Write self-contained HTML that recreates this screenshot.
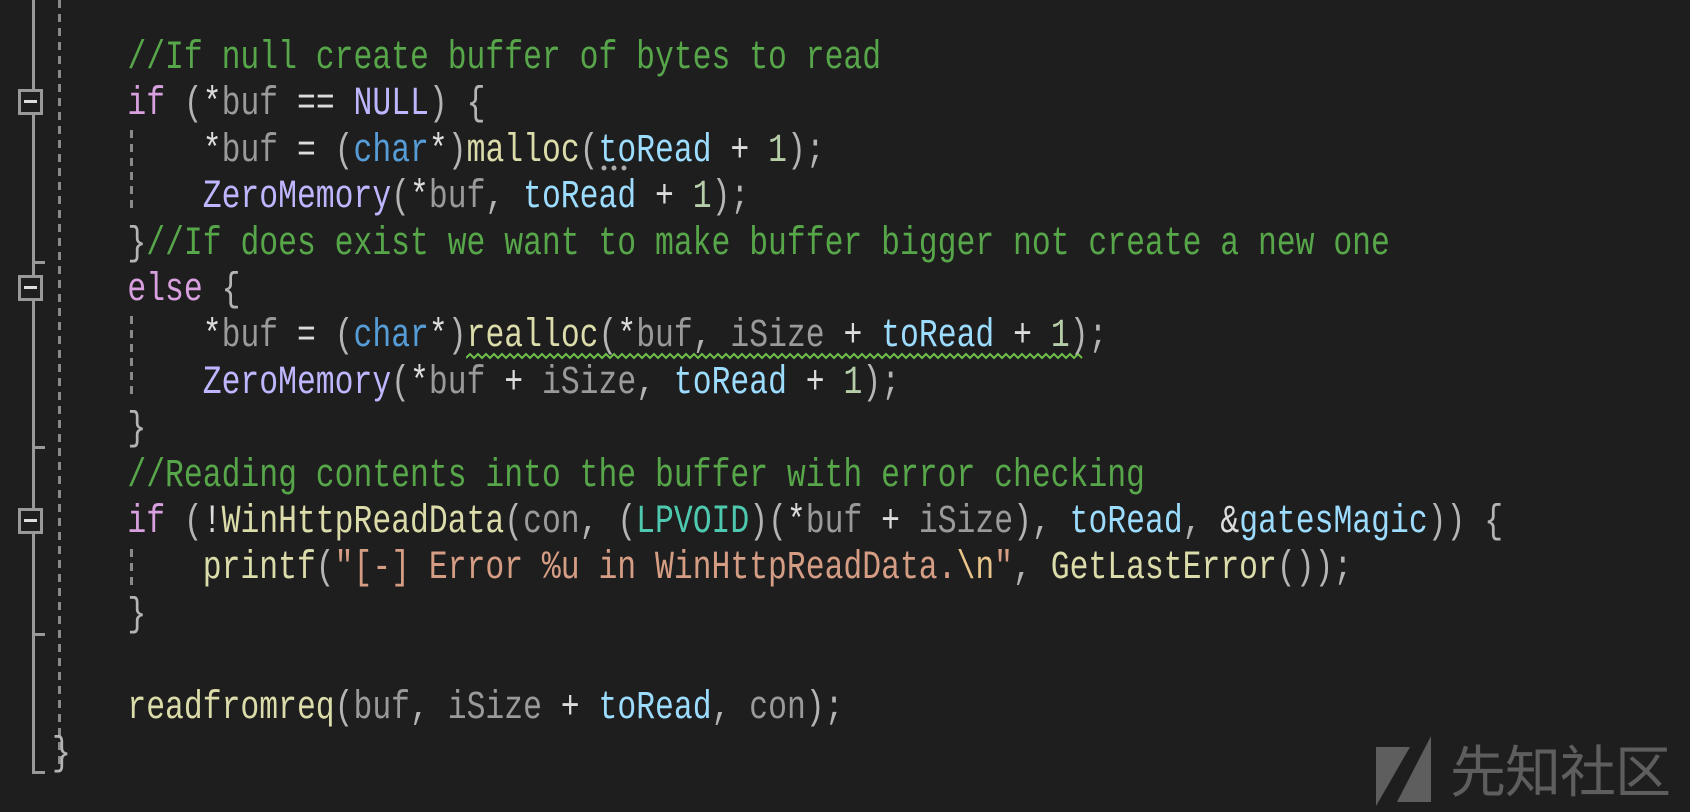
<!DOCTYPE html>
<html><head><meta charset="utf-8"><style>
html,body{margin:0;padding:0;background:#1e1e1e;width:1690px;height:812px;overflow:hidden;position:relative}
.code{position:absolute;left:52px;top:36px;transform:scaleX(0.785);transform-origin:0 0;font-family:"Liberation Mono",monospace;font-size:40px;line-height:46.4px;white-space:pre;color:#b4b4b4}
.c{color:#57a64a}.k{color:#d8a0df}.t{color:#569cd6}.f{color:#dcdcaa}.m{color:#beb7ff}.p{color:#9cdcfe}.v{color:#9a9a9a}.n{color:#b5cea8}.s{color:#d69d85}.e{color:#e8c48a}.ty{color:#4ec9b0}.d{color:#dcdcdc}
.abs{position:absolute}
.box{position:absolute;left:18px;width:19px;height:20px;border:3px solid #999;background:#1e1e1e}
.box:after{content:"";position:absolute;left:3px;top:8px;width:13px;height:3px;background:#ddd}
.tick{position:absolute;left:32px;width:13px;height:3px;background:#999}
.dash{position:absolute;width:3px;background:repeating-linear-gradient(#8a8a8a 0 8px,transparent 8px 14px)}
</style></head><body>
<div class="abs" style="left:32px;top:0;width:3px;height:774px;background:#999"></div>
<div class="box" style="top:89px"></div>
<div class="tick" style="top:261px"></div>
<div class="box" style="top:275px"></div>
<div class="tick" style="top:446px"></div>
<div class="box" style="top:508px"></div>
<div class="tick" style="top:633px"></div>
<div class="tick" style="top:771px"></div>
<div class="dash" style="left:58px;top:0;height:766px"></div>
<div class="dash" style="left:130px;top:130px;height:80px"></div>
<div class="dash" style="left:130px;top:316px;height:82px"></div>
<div class="dash" style="left:130px;top:549px;height:40px"></div>
<svg class="abs" style="left:466px;top:350px" width="618" height="12"><polyline fill="none" stroke="#6fbf4a" stroke-width="2" points="0,8 4,4 8,8 12,4 16,8 20,4 24,8 28,4 32,8 36,4 40,8 44,4 48,8 52,4 56,8 60,4 64,8 68,4 72,8 76,4 80,8 84,4 88,8 92,4 96,8 100,4 104,8 108,4 112,8 116,4 120,8 124,4 128,8 132,4 136,8 140,4 144,8 148,4 152,8 156,4 160,8 164,4 168,8 172,4 176,8 180,4 184,8 188,4 192,8 196,4 200,8 204,4 208,8 212,4 216,8 220,4 224,8 228,4 232,8 236,4 240,8 244,4 248,8 252,4 256,8 260,4 264,8 268,4 272,8 276,4 280,8 284,4 288,8 292,4 296,8 300,4 304,8 308,4 312,8 316,4 320,8 324,4 328,8 332,4 336,8 340,4 344,8 348,4 352,8 356,4 360,8 364,4 368,8 372,4 376,8 380,4 384,8 388,4 392,8 396,4 400,8 404,4 408,8 412,4 416,8 420,4 424,8 428,4 432,8 436,4 440,8 444,4 448,8 452,4 456,8 460,4 464,8 468,4 472,8 476,4 480,8 484,4 488,8 492,4 496,8 500,4 504,8 508,4 512,8 516,4 520,8 524,4 528,8 532,4 536,8 540,4 544,8 548,4 552,8 556,4 560,8 564,4 568,8 572,4 576,8 580,4 584,8 588,4 592,8 596,4 600,8 604,4 608,8 612,4 616,8"/></svg>
<svg class="abs" style="left:600px;top:164px" width="30" height="8"><circle cx="4" cy="4" r="2.5" fill="#aaa"/><circle cx="14" cy="4" r="2.5" fill="#aaa"/><circle cx="24" cy="4" r="2.5" fill="#aaa"/></svg>
<div class="code"><span class="c">    //If null create buffer of bytes to read</span>
    <span class="k">if</span> (<span class="d">*</span><span class="v">buf</span> <span class="d">==</span> <span class="m">NULL</span>) {
        <span class="d">*</span><span class="v">buf</span> <span class="d">=</span> (<span class="t">char</span><span class="d">*</span>)<span class="f">malloc</span>(<span class="p">toRead</span> <span class="d">+</span> <span class="n">1</span>);
        <span class="m">ZeroMemory</span>(<span class="d">*</span><span class="v">buf</span>, <span class="p">toRead</span> <span class="d">+</span> <span class="n">1</span>);
    }<span class="c">//If does exist we want to make buffer bigger not create a new one</span>
    <span class="k">else</span> {
        <span class="d">*</span><span class="v">buf</span> <span class="d">=</span> (<span class="t">char</span><span class="d">*</span>)<span class="f">realloc</span>(<span class="d">*</span><span class="v">buf</span>, <span class="v">iSize</span> <span class="d">+</span> <span class="p">toRead</span> <span class="d">+</span> <span class="n">1</span>);
        <span class="m">ZeroMemory</span>(<span class="d">*</span><span class="v">buf</span> <span class="d">+</span> <span class="v">iSize</span>, <span class="p">toRead</span> <span class="d">+</span> <span class="n">1</span>);
    }
<span class="c">    //Reading contents into the buffer with error checking</span>
    <span class="k">if</span> (<span class="d">!</span><span class="f">WinHttpReadData</span>(<span class="v">con</span>, (<span class="ty">LPVOID</span>)(<span class="d">*</span><span class="v">buf</span> <span class="d">+</span> <span class="v">iSize</span>), <span class="p">toRead</span>, <span class="d">&amp;</span><span class="p">gatesMagic</span>)) {
        <span class="f">printf</span>(<span class="s">"[-] Error %u in WinHttpReadData.</span><span class="e">\n</span><span class="s">"</span>, <span class="f">GetLastError</span>());
    }

    <span class="f">readfromreq</span>(<span class="v">buf</span>, <span class="v">iSize</span> <span class="d">+</span> <span class="p">toRead</span>, <span class="v">con</span>);
}</div>
<svg class="abs" style="left:1376px;top:736px" width="58" height="72"><polygon points="0,11 34,11 0,70" fill="#5e5e5e"/><polygon points="55,0 55,66 21,66" fill="#5e5e5e"/></svg>
<div class="abs" style="left:1450px;top:733px;font-family:'Noto Sans CJK SC',sans-serif;font-size:56px;line-height:72px;color:#5e5e5e;letter-spacing:-1px">先知社区</div>
</body></html>
